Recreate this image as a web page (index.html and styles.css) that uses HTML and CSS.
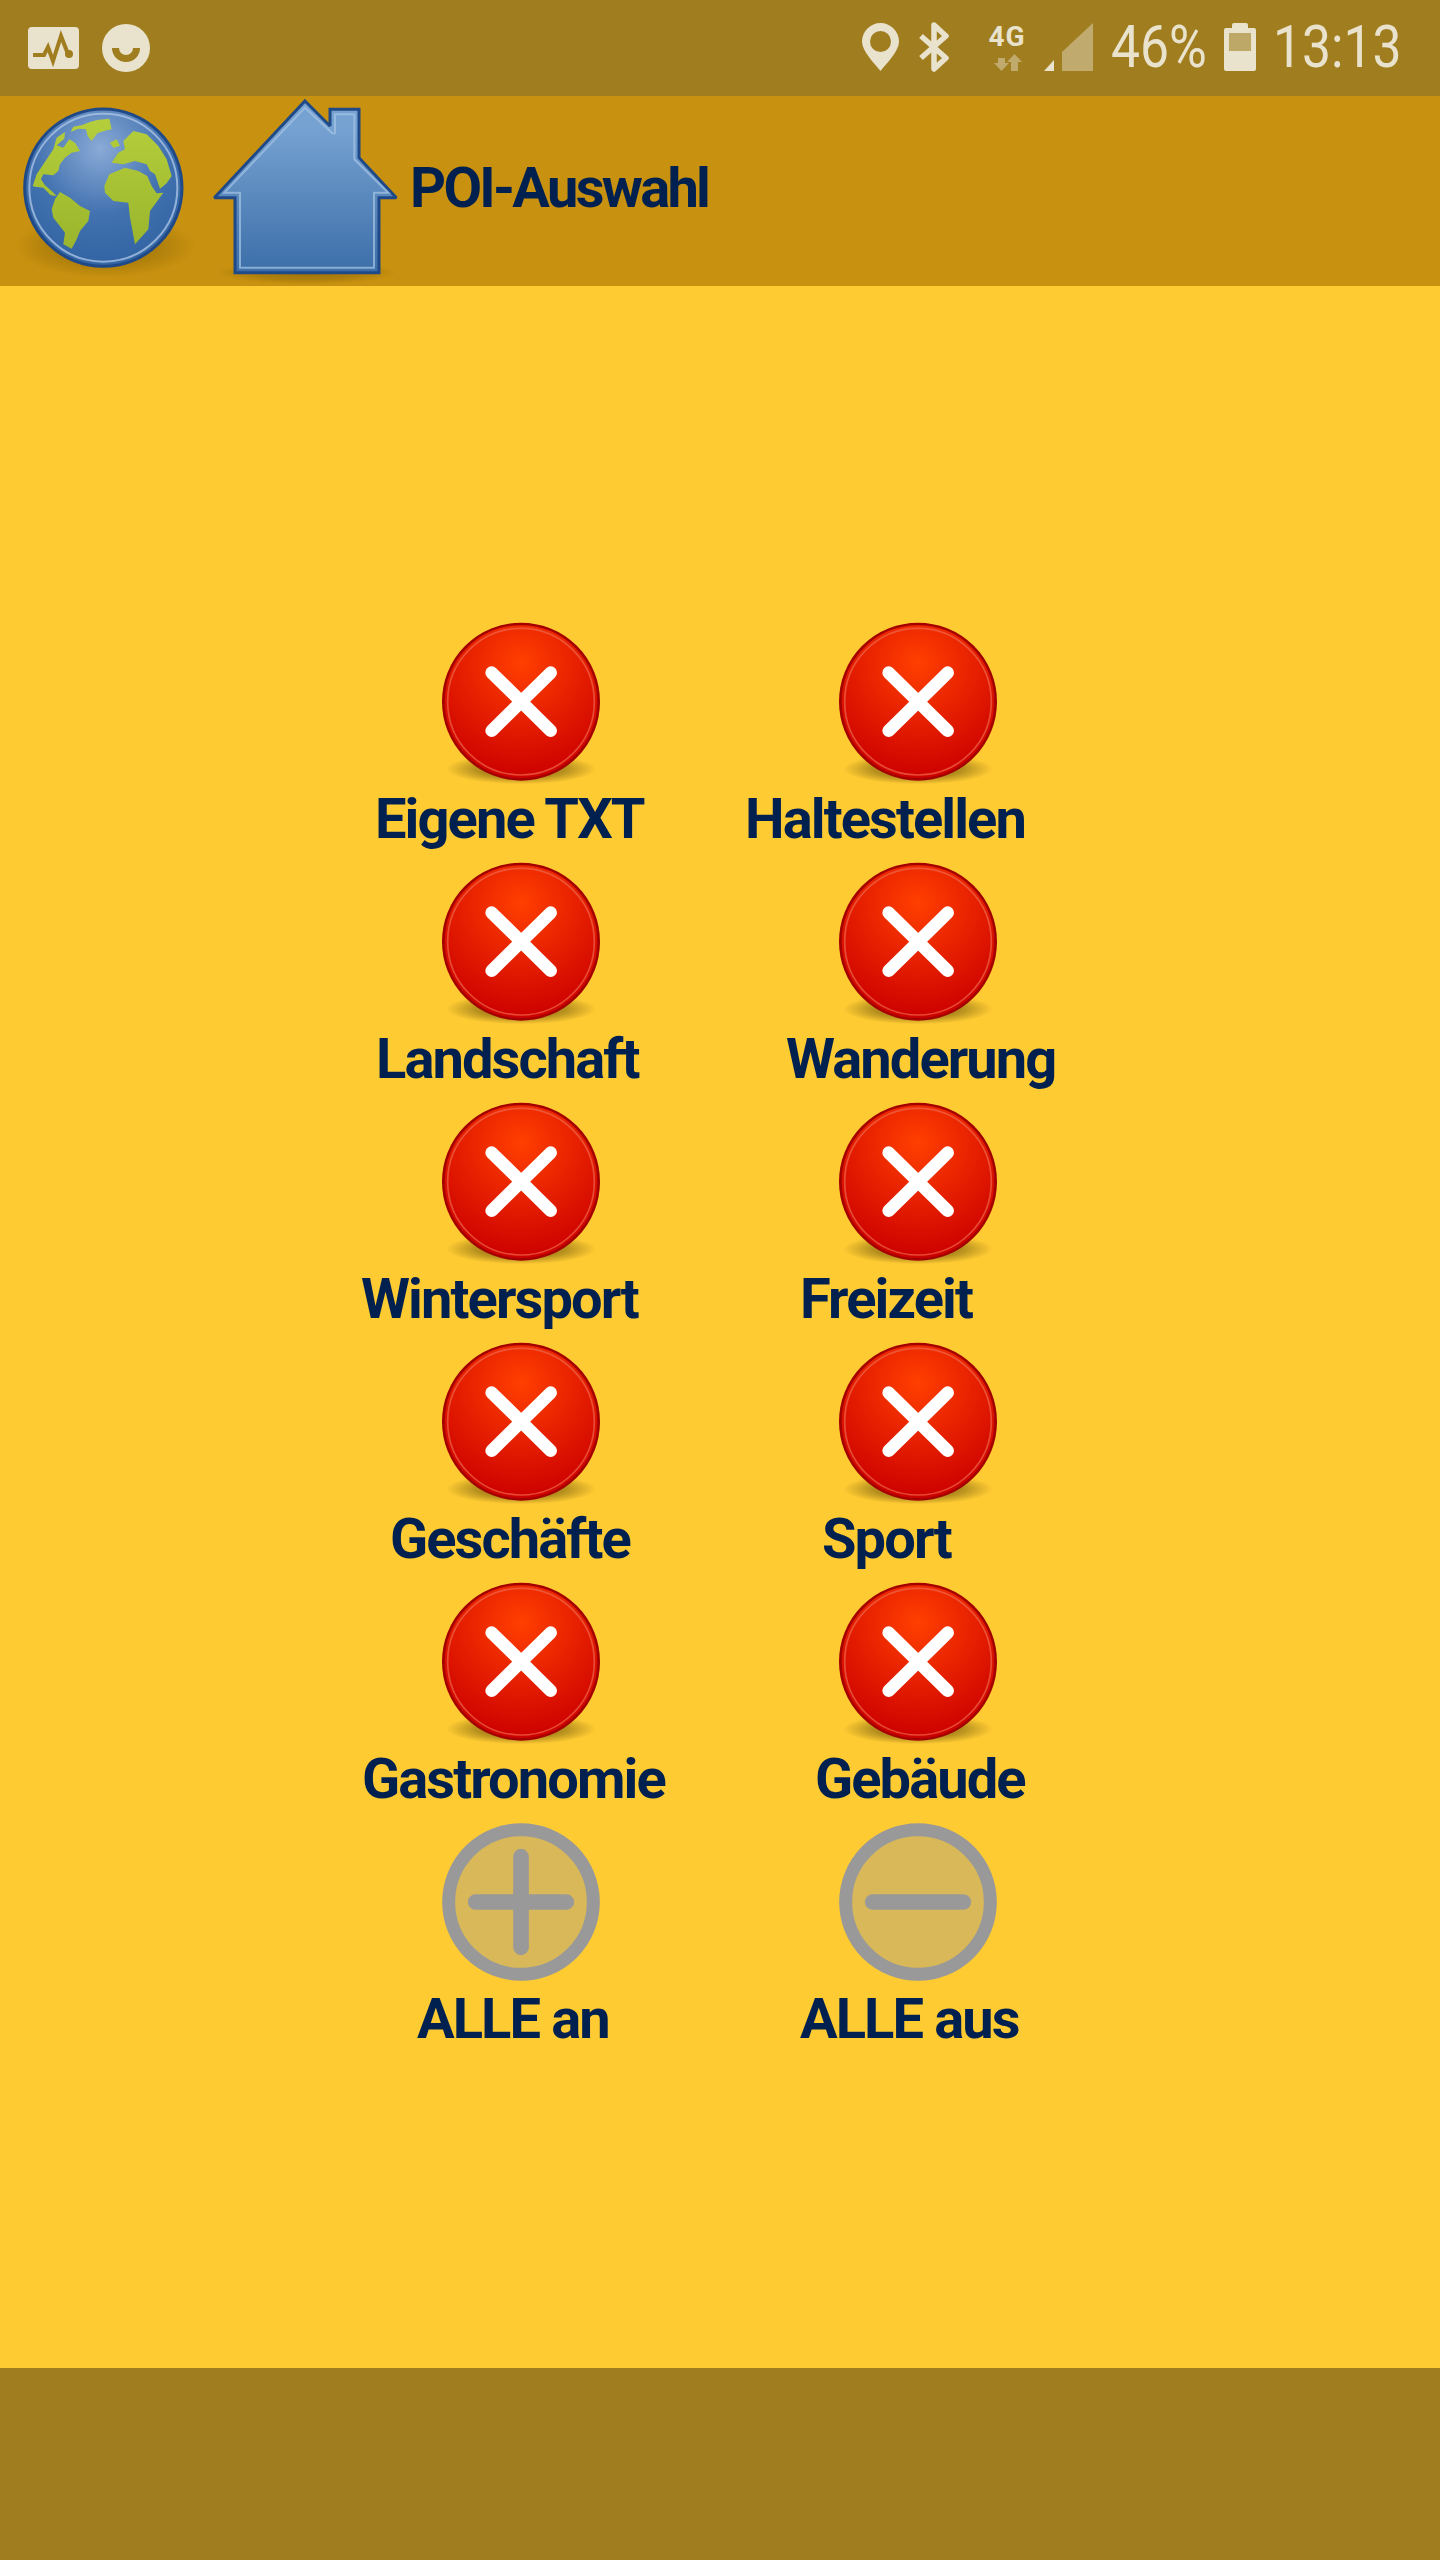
FILE: index.html
```html
<!DOCTYPE html>
<html lang="de">
<head>
  <meta charset="UTF-8">
  <meta name="viewport" content="width=device-width, initial-scale=1.0">
  <title>POI-Auswahl</title>
  <link rel="stylesheet" href="styles.css">
</head>
<body>
  <svg class="defs" width="0" height="0" aria-hidden="true">
    <defs>
      <radialGradient id="redFill" cx="50%" cy="25%" r="75%">
        <stop offset="0" stop-color="#ff3f00"/>
        <stop offset="1" stop-color="#cc0000"/>
      </radialGradient>
      <radialGradient id="shadowFill">
        <stop offset="0" stop-color="#4a3a00" stop-opacity=".7"/>
        <stop offset=".6" stop-color="#4a3a00" stop-opacity=".4"/>
        <stop offset="1" stop-color="#4a3a00" stop-opacity="0"/>
      </radialGradient>
      <radialGradient id="globeFill" cx="48%" cy="25%" r="70%">
        <stop offset="0" stop-color="#8aaad6"/>
        <stop offset=".6" stop-color="#4272b0"/>
        <stop offset="1" stop-color="#3465a4"/>
      </radialGradient>
      <linearGradient id="landFill" gradientUnits="userSpaceOnUse" x1="0" y1="60" x2="0" y2="460">
        <stop offset="0" stop-color="#b5cf3c"/>
        <stop offset="1" stop-color="#9ab52c"/>
      </linearGradient>
      <linearGradient id="houseFill" x1="0" y1="0" x2="0" y2="1">
        <stop offset=".15" stop-color="#76a2d2"/>
        <stop offset="1" stop-color="#3c6ea8"/>
      </linearGradient>
      <symbol id="iconOff" viewBox="0 0 540 525">
        <ellipse cx="273" cy="462" rx="225" ry="46" fill="url(#shadowFill)"/>
        <circle cx="273" cy="260" r="233" fill="url(#redFill)" stroke="#a40000" stroke-width="8"/>
        <circle cx="273" cy="260" r="220" fill="none" stroke="#f0664a" stroke-opacity=".7" stroke-width="5"/>
        <path d="M185 173 L362 347 M362 173 L185 347" stroke="#fff" stroke-width="38" stroke-linecap="round"/>
      </symbol>
      <symbol id="iconPlus" viewBox="0 0 540 525">
        <circle cx="273" cy="261" r="217" fill="#d9b85a" stroke="#999" stroke-width="39"/>
        <path d="M137 261 H409 M273 125 V397" stroke="#999" stroke-width="47" stroke-linecap="round"/>
      </symbol>
      <symbol id="iconMinus" viewBox="0 0 540 525">
        <circle cx="273" cy="261" r="217" fill="#d9b85a" stroke="#999" stroke-width="39"/>
        <path d="M137 261 H409" stroke="#999" stroke-width="47" stroke-linecap="round"/>
      </symbol>
    </defs>
  </svg>

  <header class="status-bar">
    <div class="status-left">
      <svg class="st-activity" width="51" height="42" viewBox="0 0 51 42">
        <rect width="51" height="42" rx="4" fill="#e9e2cc"/>
        <path d="M5 28 H16 L20 20 L25 34 L33 9 L40 27" fill="none" stroke="#a07d1f" stroke-width="4"/>
        <circle cx="41" cy="27" r="4" fill="#a07d1f"/>
      </svg>
      <svg width="48" height="48" viewBox="0 0 48 48">
        <circle cx="24" cy="24" r="24" fill="#e9e2cc"/>
        <path d="M10 24 H17 A7 7 0 0 0 31 24 H38 A14 14 0 0 1 10 24 Z" fill="#a07d1f"/>
      </svg>
    </div>
    <div class="status-right">
      <svg class="st-pin" width="37" height="48" viewBox="0 0 37 48">
        <path fill-rule="evenodd" d="M18.500 0 A18.500 18.500 0 0 1 37 18.500 C37 28 25 40 18.500 48 C12 40 0 28 0 18.500 A18.500 18.500 0 0 1 18.500 0 Z M18.500 8 A10.500 10.500 0 1 0 18.500 29 A10.500 10.500 0 1 0 18.500 8 Z" fill="#e9e2cc"/>
      </svg>
      <svg class="st-bt" width="31" height="50" viewBox="0 0 31 50">
        <path d="M3 14 L28 36 L16 47 V3 L28 14 L3 36" fill="none" stroke="#e9e2cc" stroke-width="5.500" stroke-linejoin="round"/>
      </svg>
      <div class="st-net">
        <span class="st-4g">4G</span>
        <svg width="30" height="18" viewBox="0 0 30 18">
          <path d="M6 5 H13 V10 H17 L9.500 18 L2 10 H6 Z M19 18 V9 H15 L22.500 1 L30 9 H26 V18 Z" fill="#e9e2cc" fill-opacity=".45"/>
        </svg>
      </div>
      <svg class="st-signal" width="49" height="48" viewBox="0 0 49 48">
        <path d="M0 48 L10 37 V48 Z" fill="#e9e2cc"/>
        <path d="M18 29 L49 0 V48 H18 Z" fill="#e9e2cc" fill-opacity=".45"/>
      </svg>
      <span class="st-text st-percent">46%</span>
      <svg class="st-battery" width="32" height="48" viewBox="0 0 32 48">
        <path d="M8 2 Q8 0 10 0 H22 Q24 0 24 2 V5 H30 Q32 5 32 7 V46 Q32 48 30 48 H2 Q0 48 0 46 V7 Q0 5 2 5 H8 Z" fill="#e9e2cc"/>
        <rect x="5" y="10" width="22" height="18" fill="#bda868"/>
      </svg>
      <span class="st-text st-time">13:13</span>
    </div>
  </header>

  <div class="action-bar">
    <svg class="globe" width="195" height="190" viewBox="0 0 585 570">
      <ellipse cx="285" cy="450" rx="270" ry="95" fill="url(#shadowFill)" opacity=".5"/>
      <circle cx="280" cy="275" r="236" fill="url(#globeFill)" stroke="#204a87" stroke-width="9"/>
      <circle cx="280" cy="275" r="222" fill="none" stroke="#a9c3e4" stroke-opacity=".8" stroke-width="6"/>
      <g fill="url(#landFill)">
        <path d="M182 108 L190 92 L215 88 L240 78 L262 72 L298 68 L305 100 L282 105 L262 112 L245 135 L233 120 L228 100 L205 98 Z"/>
        <path d="M68 270 L80 235 L100 205 L130 160 L140 125 L165 108 L163 128 L140 148 L160 155 L178 130 L195 140 L210 165 L185 170 L165 185 L150 205 L145 225 L130 238 L100 235 L93 250 L105 268 L125 285 L140 300 L122 298 L100 275 L75 272 Z"/>
        <path d="M125 340 L135 310 L150 288 L180 305 L210 330 L240 345 L235 375 L210 405 L200 430 L185 458 L160 445 L165 410 L130 365 Z"/>
        <path d="M283 270 L298 235 L345 215 L385 225 L412 240 L425 270 L440 292 L460 290 L420 345 L415 400 L375 445 L360 365 L355 320 L310 315 L285 290 Z"/>
        <path d="M305 200 L325 170 L345 160 L340 135 L370 105 L410 115 L445 150 L470 190 L485 240 L470 262 L450 278 L435 235 L420 225 L410 205 L375 195 L340 205 Z"/>
        <path d="M300 140 L320 130 L330 150 L310 155 Z"/>
      </g>
    </svg>
    <svg class="house" width="200" height="190" viewBox="0 0 600 570">
      <ellipse cx="305" cy="530" rx="270" ry="35" fill="url(#shadowFill)" opacity=".5"/>
      <path d="M300 15 L375 90 V40 H462 V185 L574 305 H522 V530 H90 V305 H28 Z" fill="url(#houseFill)" stroke="#204a87" stroke-width="9" stroke-miterlimit="2"/>
      <path d="M300 35 L382 112 L390 112 V55 H448 V190 L550 290 H507 V515 H105 V290 H58 Z" fill="none" stroke="#a3c1e2" stroke-opacity=".75" stroke-width="6"/>
    </svg>
    <h1 class="title">POI-Auswahl</h1>
  </div>

  <main class="content">
    <div class="poi-grid">
      <div class="poi"><svg class="poi-icon"><use href="#iconOff"/></svg><span class="poi-label off-eigene">Eigene TXT</span></div>
      <div class="poi"><svg class="poi-icon"><use href="#iconOff"/></svg><span class="poi-label off-halte">Haltestellen</span></div>
      <div class="poi"><svg class="poi-icon"><use href="#iconOff"/></svg><span class="poi-label off-land">Landschaft</span></div>
      <div class="poi"><svg class="poi-icon"><use href="#iconOff"/></svg><span class="poi-label off-wander">Wanderung</span></div>
      <div class="poi"><svg class="poi-icon"><use href="#iconOff"/></svg><span class="poi-label off-winter">Wintersport</span></div>
      <div class="poi"><svg class="poi-icon"><use href="#iconOff"/></svg><span class="poi-label off-frei">Freizeit</span></div>
      <div class="poi"><svg class="poi-icon"><use href="#iconOff"/></svg><span class="poi-label off-gesch">Geschäfte</span></div>
      <div class="poi"><svg class="poi-icon"><use href="#iconOff"/></svg><span class="poi-label off-sport">Sport</span></div>
      <div class="poi"><svg class="poi-icon"><use href="#iconOff"/></svg><span class="poi-label off-gastro">Gastronomie</span></div>
      <div class="poi"><svg class="poi-icon"><use href="#iconOff"/></svg><span class="poi-label off-geb">Gebäude</span></div>
      <div class="poi"><svg class="poi-icon"><use href="#iconPlus"/></svg><span class="poi-label off-an">ALLE an</span></div>
      <div class="poi"><svg class="poi-icon"><use href="#iconMinus"/></svg><span class="poi-label off-aus">ALLE aus</span></div>
    </div>
  </main>

  <footer class="bottom-bar"></footer>
</body>
</html>
```

FILE: styles.css
```css
html, body {
  margin: 0;
  padding: 0;
}
body {
  width: 1440px;
  height: 2560px;
  display: flex;
  flex-direction: column;
  overflow: hidden;
  background-color: #ffcb33;
  font-family: Roboto, sans-serif;
  color: #002050;
}
.defs {
  position: absolute;
}

/* status bar */
.status-bar {
  height: 96px;
  flex: none;
  display: flex;
  justify-content: space-between;
  background-color: #a07d1f;
}
.status-left {
  display: flex;
  align-items: center;
  padding-left: 28px;
  gap: 23px;
}
.status-right {
  display: flex;
  align-items: flex-start;
  padding-right: 38px;
  padding-top: 23px;
  color: #e9e2cc;
}
.st-bt {
  margin-left: 19px;
  margin-top: -1px;
}
.st-net {
  margin-left: 38px;
  width: 40px;
  display: flex;
  flex-direction: column;
  align-items: center;
}
.st-4g {
  font-size: 28px;
  font-weight: 700;
  line-height: 28px;
  letter-spacing: 1px;
}
.st-net svg {
  margin-top: 2px;
}
.st-signal {
  margin-left: 17px;
}
.st-text {
  display: inline-block;
  font-size: 60px;
  line-height: 48px;
  transform: scaleX(.86);
  transform-origin: left center;
}
.st-percent {
  margin-left: 18px;
  width: 97px;
}
.st-battery {
  margin-left: 16px;
}
.st-time {
  margin-left: 17px;
  width: 129px;
}

/* action bar */
.action-bar {
  height: 190px;
  flex: none;
  display: flex;
  align-items: center;
  padding-left: 10px;
  background-color: #c8910f;
}
.title {
  margin: 0 0 6px 5px;
  font-size: 56px;
  font-weight: 700;
  line-height: 60px;
  letter-spacing: -2.700px;
}

/* poi grid */
.content {
  flex: 1;
  padding: 329px 0 0 340px;
}
.poi-grid {
  display: grid;
  grid-template-columns: 397px 397px;
  grid-auto-rows: 240px;
}
.poi {
  display: flex;
  flex-direction: column;
  align-items: flex-start;
}
.poi-icon {
  display: block;
  width: 180px;
  height: 175px;
  margin-left: 90px;
}
.poi-label {
  margin-top: -1px;
  font-size: 56px;
  font-weight: 700;
  line-height: 60px;
  letter-spacing: -1.900px;
  white-space: nowrap;
}
.off-eigene { margin-left: 35px; }
.off-halte { margin-left: 8px; }
.off-land { margin-left: 36px; }
.off-wander { margin-left: 49px; }
.off-winter { margin-left: 21px; }
.off-frei { margin-left: 63px; }
.off-gesch { margin-left: 50px; }
.off-sport { margin-left: 85px; }
.off-gastro { margin-left: 22px; }
.off-geb { margin-left: 78px; }
.off-an { margin-left: 77px; }
.off-aus { margin-left: 63px; }

.bottom-bar {
  height: 192px;
  flex: none;
  background-color: #a07d1f;
}
```
